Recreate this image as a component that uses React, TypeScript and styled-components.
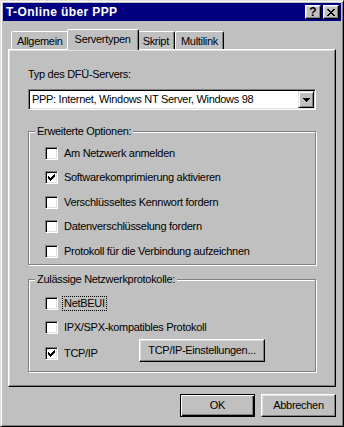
import React from "react";
import styled, { createGlobalStyle } from "styled-components";

const Global = createGlobalStyle`
  html, body { margin: 0; padding: 0; background: #c0c0c0; }
  * { box-sizing: border-box; }
`;

const Window = styled.div`
  width: 344px;
  height: 427px;
  display: flex;
  flex-direction: column;
  background: #c0c0c0;
  border: 1px solid;
  border-color: #dfdfdf #000 #000 #dfdfdf;
  box-shadow: inset 1px 1px #fff, inset -1px -1px #808080;
  padding: 2px;
  font-family: "Liberation Sans", Arial, sans-serif;
  font-size: 11px;
  letter-spacing: -0.3px;
  color: #000;
`;

const TitleBar = styled.div`
  height: 18px;
  flex: none;
  display: flex;
  align-items: center;
  background: #000080;
  padding: 0 2px 0 3px;
`;

const TitleText = styled.div`
  flex: 1;
  color: #fff;
  font-weight: bold;
  font-size: 12px;
  letter-spacing: 0.4px;
  line-height: 14px;
`;

const CaptionButtons = styled.div`
  display: flex;
  gap: 2px;
`;

const CaptionButton = styled.div`
  width: 16px;
  height: 14px;
  display: flex;
  align-items: center;
  justify-content: center;
  background: #c0c0c0;
  border: 1px solid;
  border-color: #fff #000 #000 #fff;
  box-shadow: inset -1px -1px #808080, inset 1px 1px #dfdfdf;
  font-weight: bold;
  font-size: 12px;
  line-height: 11px;
  letter-spacing: 0;
`;

const Body = styled.div`
  flex: 1;
  display: flex;
  flex-direction: column;
  padding: 8px 5px 7px 5px;
`;

const TabStrip = styled.div`
  display: flex;
  align-items: flex-end;
  height: 21px;
  margin-bottom: -1px;
  padding-left: 3px;
`;

const Tab = styled.div<{ $active?: boolean }>`
  position: relative;
  z-index: ${(p) => (p.$active ? 1 : 0)};
  height: ${(p) => (p.$active ? 21 : 18)}px;
  margin: ${(p) => (p.$active ? "0 -2px 0 -2px" : "0 0 1px 0")};
  padding: 3px ${(p) => (p.$active ? 7 : 5)}px 0;
  line-height: 13px;
  background: #c0c0c0;
  border-top: 1px solid #fff;
  border-left: 1px solid #fff;
  border-right: 1px solid #000;
  border-radius: 2px 2px 0 0;
  box-shadow: inset -1px 0 #808080;
  white-space: nowrap;
`;

const Panel = styled.div`
  border: 1px solid;
  border-color: #fff #000 #000 #fff;
  box-shadow: inset -1px -1px #808080, inset 1px 1px #dfdfdf;
  padding: 18px 19px 14px;
  display: flex;
  flex-direction: column;
`;

const FieldLabel = styled.div`
  line-height: 13px;
  margin-bottom: 8px;
`;

const Combo = styled.div`
  height: 21px;
  display: flex;
  align-items: center;
  background: #fff;
  border: 1px solid;
  border-color: #808080 #fff #fff #808080;
  box-shadow: inset 1px 1px #000, inset -1px -1px #dfdfdf;
  padding: 1px 1px 1px 3px;
`;

const ComboText = styled.div`
  flex: 1;
  line-height: 13px;
`;

const ComboButton = styled.div`
  width: 16px;
  height: 17px;
  display: flex;
  align-items: center;
  justify-content: center;
  background: #c0c0c0;
  border: 1px solid;
  border-color: #dfdfdf #000 #000 #dfdfdf;
  box-shadow: inset 1px 1px #fff, inset -1px -1px #808080;
`;

const GroupBox = styled.div<{ $top: number; $pt: number; $pb: number }>`
  position: relative;
  margin-top: ${(p) => p.$top}px;
  border: 1px solid #808080;
  box-shadow: 1px 1px 0 #fff, inset 1px 1px 0 #fff;
  padding: ${(p) => p.$pt}px 0 ${(p) => p.$pb}px 16px;
  display: flex;
  flex-direction: column;
`;

const Legend = styled.div`
  position: absolute;
  top: -7px;
  left: 6px;
  padding: 0 2px 0 2px;
  line-height: 13px;
  background: #c0c0c0;
  white-space: nowrap;
`;

const CheckRow = styled.div<{ $h: number }>`
  height: ${(p) => p.$h}px;
  display: flex;
  align-items: center;
`;

const ProtocolRow = styled.div`
  display: grid;
  grid-template-columns: 94px auto;
  align-items: end;
  justify-items: start;
  & > label {
    margin-bottom: 1px;
  }
`;

const CheckItem = styled.label`
  display: flex;
  align-items: center;
`;

const Box = styled.span`
  width: 13px;
  height: 13px;
  flex: none;
  display: flex;
  align-items: center;
  justify-content: center;
  background: #fff;
  border: 1px solid;
  border-color: #808080 #fff #fff #808080;
  box-shadow: inset 1px 1px #000, inset -1px -1px #dfdfdf;
`;

const CheckText = styled.span<{ $focus?: boolean }>`
  margin-left: 4px;
  padding: 0 1px;
  line-height: 13px;
  border: 1px dotted ${(p) => (p.$focus ? "#000" : "transparent")};
  white-space: nowrap;
`;

const Button = styled.button<{ $default?: boolean; $w: number }>`
  width: ${(p) => p.$w}px;
  height: 23px;
  padding: 0;
  margin: 0;
  background: #c0c0c0;
  font-family: inherit;
  font-size: 11px;
  letter-spacing: -0.3px;
  color: #000;
  line-height: 13px;
  border: 1px solid;
  border-color: ${(p) => (p.$default ? "#000" : "#fff #000 #000 #fff")};
  box-shadow: ${(p) =>
    p.$default
      ? "inset 1px 1px #fff, inset -1px -1px #000, inset -2px -2px #808080"
      : "inset -1px -1px #808080, inset 1px 1px #dfdfdf"};
`;

const Footer = styled.div`
  display: flex;
  justify-content: flex-end;
  gap: 6px;
  margin-top: 7px;
`;

const Pixels = styled.svg`
  display: block;
  shape-rendering: crispEdges;
`;

const CheckMark = () => (
  <Pixels width="7" height="7" viewBox="0 0 7 7">
    <path
      fill="#000"
      d="M6 0h1v1h-1z M5 1h2v1h-2z M0 2h1v1h-1z M4 2h3v1h-3z M0 3h2v1h-2z M3 3h3v1h-3z M0 4h5v1h-5z M1 5h3v1h-3z M2 6h1v1h-1z"
    />
  </Pixels>
);

const CloseGlyph = () => (
  <Pixels width="8" height="7" viewBox="0 0 8 7">
    <path
      fill="#000"
      d="M0 0h2v1H0z M6 0h2v1H6z M1 1h2v1H1z M5 1h2v1H5z M2 2h4v1H2z M3 3h2v1H3z M2 4h4v1H2z M1 5h2v1H1z M5 5h2v1H5z M0 6h2v1H0z M6 6h2v1H6z"
    />
  </Pixels>
);

const DownArrow = () => (
  <Pixels width="7" height="4" viewBox="0 0 7 4">
    <path fill="#000" d="M0 0h7v1H0z M1 1h5v1H1z M2 2h3v1H2z M3 3h1v1H3z" />
  </Pixels>
);

const Check = ({
  label,
  checked,
  focus,
}: {
  label: string;
  checked?: boolean;
  focus?: boolean;
}) => (
  <CheckItem>
    <Box>{checked && <CheckMark />}</Box>
    <CheckText $focus={focus}>{label}</CheckText>
  </CheckItem>
);

const options: { label: string; checked?: boolean }[] = [
  { label: "Am Netzwerk anmelden" },
  { label: "Softwarekomprimierung aktivieren", checked: true },
  { label: "Verschlüsseltes Kennwort fordern" },
  { label: "Datenverschlüsselung fordern" },
  { label: "Protokoll für die Verbindung aufzeichnen" },
];

export default function App() {
  return (
    <>
      <Global />
      <Window>
        <TitleBar>
          <TitleText>T-Online über PPP</TitleText>
          <CaptionButtons>
            <CaptionButton>?</CaptionButton>
            <CaptionButton>
              <CloseGlyph />
            </CaptionButton>
          </CaptionButtons>
        </TitleBar>
        <Body>
          <TabStrip>
            <Tab>Allgemein</Tab>
            <Tab $active>Servertypen</Tab>
            <Tab>Skript</Tab>
            <Tab>Multilink</Tab>
          </TabStrip>
          <Panel>
            <FieldLabel>Typ des DFÜ-Servers:</FieldLabel>
            <Combo>
              <ComboText>PPP: Internet, Windows NT Server, Windows 98</ComboText>
              <ComboButton>
                <DownArrow />
              </ComboButton>
            </Combo>
            <GroupBox $top={21} $pt={9} $pb={0.5}>
              <Legend>Erweiterte Optionen:</Legend>
              {options.map((o) => (
                <CheckRow key={o.label} $h={24.5}>
                  <Check label={o.label} checked={o.checked} />
                </CheckRow>
              ))}
            </GroupBox>
            <GroupBox $top={14} $pt={12} $pb={9}>
              <Legend>Zulässige Netzwerkprotokolle:</Legend>
              <CheckRow $h={23.5}>
                <Check label="NetBEUI" focus />
              </CheckRow>
              <CheckRow $h={23.5}>
                <Check label="IPX/SPX-kompatibles Protokoll" />
              </CheckRow>
              <ProtocolRow>
                <Check label="TCP/IP" checked />
                <Button $w={126}>TCP/IP-Einstellungen...</Button>
              </ProtocolRow>
            </GroupBox>
          </Panel>
          <Footer>
            <Button $default $w={75}>
              OK
            </Button>
            <Button $w={75}>Abbrechen</Button>
          </Footer>
        </Body>
      </Window>
    </>
  );
}
